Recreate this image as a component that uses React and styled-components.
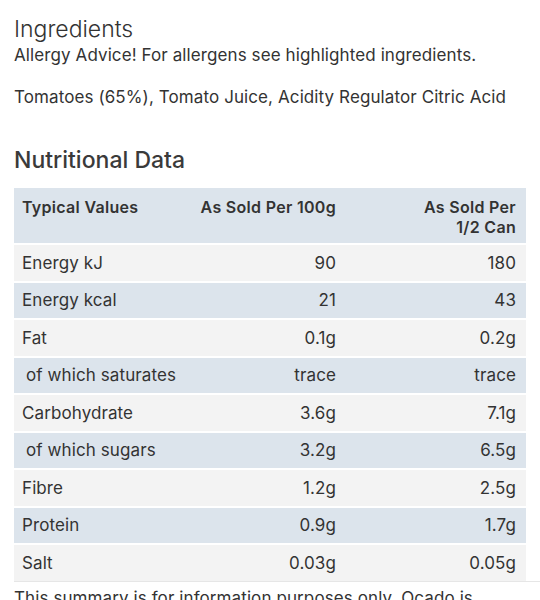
import React from "react";
import styled, { createGlobalStyle } from "styled-components";

const GlobalStyle = createGlobalStyle`
  body {
    margin: 0;
    background: #fff;
    font-family: Inter, "Noto Sans", "Liberation Sans", sans-serif;
    color: #333;
  }
`;

const rows = [
  ["Energy kJ", "90", "180"],
  ["Energy kcal", "21", "43"],
  ["Fat", "0.1g", "0.2g"],
  ["of which saturates", "trace", "trace", true],
  ["Carbohydrate", "3.6g", "7.1g"],
  ["of which sugars", "3.2g", "6.5g", true],
  ["Fibre", "1.2g", "2.5g"],
  ["Protein", "0.9g", "1.7g"],
  ["Salt", "0.03g", "0.05g"],
];

function App() {
  return (
    <Page>
      <GlobalStyle />
      <Section>
        <Title>Ingredients</Title>
        <Text>Allergy Advice! For allergens see highlighted ingredients.</Text>
        <Text spaced>Tomatoes (65%), Tomato Juice, Acidity Regulator Citric Acid</Text>
      </Section>
      <Section>
        <SubTitle>Nutritional Data</SubTitle>
        <TableWrap>
          <Table>
            <colgroup>
              <col style={{ width: "176px" }} />
              <col style={{ width: "156px" }} />
              <col style={{ width: "180px" }} />
            </colgroup>
            <thead>
              <tr>
                <Th>Typical Values</Th>
                <Th right>As Sold Per 100g</Th>
                <Th right wide>As Sold Per 1/2 Can</Th>
              </tr>
            </thead>
            <tbody>
              {rows.map(([label, a, b, sub], i) => (
                <Row key={label} shaded={i % 2 === 1}>
                  <Td indent={sub}>{label}</Td>
                  <Td right>{a}</Td>
                  <Td right>{b}</Td>
                </Row>
              ))}
            </tbody>
          </Table>
        </TableWrap>
        <Text>This summary is for information purposes only. Ocado is unable to accept liability for any incorrect information.</Text>
      </Section>
    </Page>
  );
}

const Page = styled.div`
  padding: 14px 14px 0;
`;

const Section = styled.section`
  display: flex;
  flex-direction: column;
`;

const Title = styled.h2`
  margin: 0;
  font-size: 23px;
  font-weight: 300;
  line-height: 30px;
  color: #333;
`;

const SubTitle = styled.h3`
  margin: 38px 0 14px;
  font-size: 23px;
  font-weight: 500;
  line-height: 28px;
  color: #3a3a3a;
`;

const Text = styled.p`
  margin: ${(p) => (p.spaced ? "20px 0 0" : "0")};
  font-size: 17px;
  line-height: 22px;
  letter-spacing: 0.1px;
  color: #333;
`;

const TableWrap = styled.div`
  margin-right: -14px;
  padding-bottom: 6px;
  background: linear-gradient(#e6e6e6, #e6e6e6) no-repeat;
  background-size: 100% 1px;
  background-position: 0 calc(100% - 5px);
`;

const Table = styled.table`
  width: 512px;
  border-collapse: collapse;
  table-layout: fixed;
  font-size: 17px;
  letter-spacing: 0.1px;
  color: #333;
`;

const Th = styled.th`
  background: #dce4ec;
  padding: 9px 10px 6px ${(p) => (p.wide ? "60px" : "8px")};
  text-align: ${(p) => (p.right ? "right" : "left")};
  white-space: ${(p) => (p.wide ? "normal" : "nowrap")};
  vertical-align: top;
  font-size: 16px;
  letter-spacing: 0.3px;
  font-weight: 600;
  line-height: 20px;
`;

const Row = styled.tr`
  background: ${(p) => (p.shaded ? "#dce4ec" : "#f3f3f3")};
  border-top: 2px solid #fff;
`;

const Td = styled.td`
  height: 35.5px;
  padding: 0 10px 0 ${(p) => (p.indent ? "12px" : "8px")};
  text-align: ${(p) => (p.right ? "right" : "left")};
  white-space: nowrap;
  vertical-align: middle;
  line-height: 20px;
`;

export default App;
